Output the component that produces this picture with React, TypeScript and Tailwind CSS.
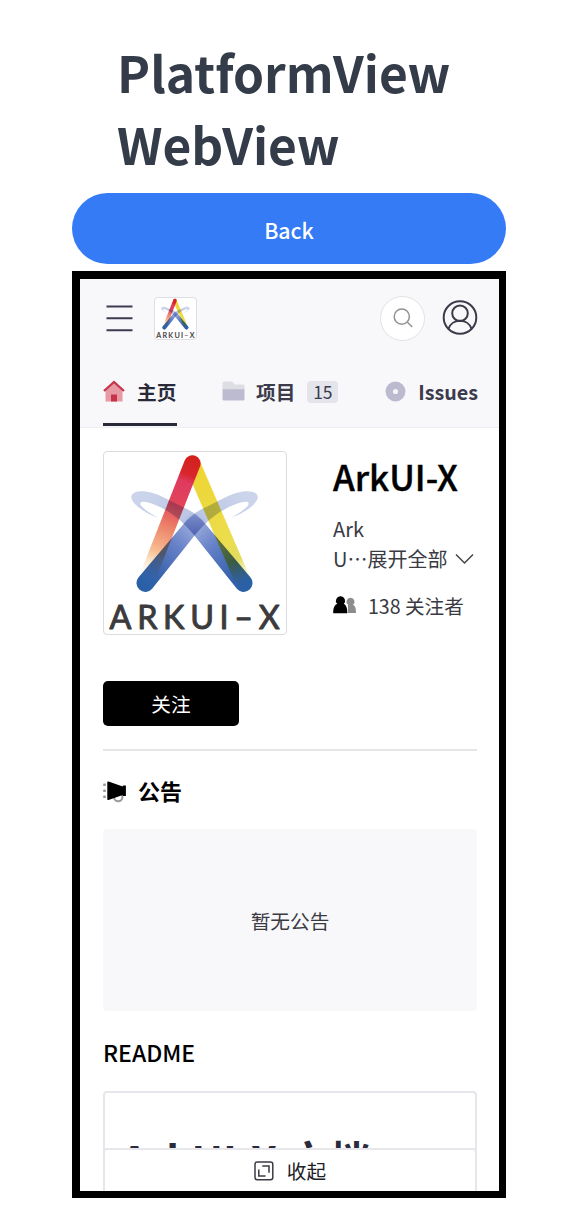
import React from "react";

const SWOOSH =
  "M129 413 L275 240 C300 216 322 204 342 196 C375 178 400 165 425 157 C455 148 486 150 490 167 C494 188 450 218 410 232 C438 216 464 199 463 189 C461 178 428 186 388 208 C358 224 330 248 300 285 L170 448 A26 26 0 0 1 129 413 Z";

function Logo({ id, className }: { id: string; className: string }) {
  return (
    <svg viewBox="24 33 552 552" className={className} aria-label="ArkUI-X">
      <defs>
        <linearGradient id={`${id}-red`} gradientUnits="userSpaceOnUse" x1="292" y1="45" x2="150" y2="430">
          <stop offset="0" stopColor="#d3201c" />
          <stop offset="0.14" stopColor="#d8262c" />
          <stop offset="0.2" stopColor="#e03a60" />
          <stop offset="0.38" stopColor="#e1455a" />
          <stop offset="0.55" stopColor="#ec8068" />
          <stop offset="0.75" stopColor="#f7bd90" />
          <stop offset="0.95" stopColor="#fbe6c0" stopOpacity="0" />
        </linearGradient>
        <linearGradient id={`${id}-yellow`} gradientUnits="userSpaceOnUse" x1="292" y1="60" x2="447" y2="430">
          <stop offset="0" stopColor="#eed431" />
          <stop offset="0.65" stopColor="#ebdd4c" />
          <stop offset="0.82" stopColor="#e0dc60" />
          <stop offset="1" stopColor="#efe97a" stopOpacity="0" />
        </linearGradient>
        <linearGradient id={`${id}-blue`} gradientUnits="userSpaceOnUse" x1="150" y1="440" x2="430" y2="150">
          <stop offset="0" stopColor="#2960a6" />
          <stop offset="0.14" stopColor="#3a64ae" />
          <stop offset="0.38" stopColor="#6681c8" />
          <stop offset="0.55" stopColor="#94a5d8" />
          <stop offset="0.68" stopColor="#bcc6e5" />
          <stop offset="1" stopColor="#cbd4ea" />
        </linearGradient>
      </defs>
      <g style={{ isolation: "isolate" }}>
        <path d="M292 68 L447 428" stroke={`url(#${id}-yellow)`} strokeWidth="48" strokeLinecap="round" />
        <path d="M292 68 L150 428" stroke={`url(#${id}-red)`} strokeWidth="50" strokeLinecap="round" />
        <path d={SWOOSH} fill={`url(#${id}-blue)`} className="mix-blend-multiply" />
        <path d={SWOOSH} fill={`url(#${id}-blue)`} className="mix-blend-multiply" transform="matrix(-1 0 0 1 597 0)" />
      </g>
      <text
        x="41"
        y="569"
        textLength="516"
        lengthAdjust="spacing"
        fill="#3b3b3d"
        stroke="#3b3b3d"
        strokeWidth="3"
        strokeLinejoin="round"
        fontSize="98"
        fontFamily="Lato, sans-serif"
      >
        ARKUI–X
      </text>
    </svg>
  );
}

function MenuIcon() {
  return (
    <svg className="h-[28px] w-[27px]" viewBox="0 0 27 28" stroke="#3c3b50" strokeWidth="2">
      <path d="M.5 2.500h26M.5 14.300h26M.5 26.300h26" />
    </svg>
  );
}

function SearchIcon() {
  return (
    <svg className="size-5" viewBox="0 0 20 20" fill="none" stroke="#929292" strokeWidth="1.5">
      <circle cx="8.8" cy="8.6" r="7.6" />
      <path d="m14.2 14 5 5" />
    </svg>
  );
}

function UserIcon() {
  return (
    <svg className="size-9" viewBox="0 0 36 36" fill="none" stroke="#3b3a4a" strokeWidth="2">
      <circle cx="18" cy="17.500" r="16.3" />
      <circle cx="18" cy="13.2" r="7.8" />
      <path d="M6.4 28.900C8 24.100 12.6 20.800 18 20.800s10 3.3 11.6 8.100" />
    </svg>
  );
}

function HomeIcon() {
  return (
    <svg className="-mt-0.5 h-[22px] w-[22px]" viewBox="0 0 22 22" fill="none">
      <path d="M2.5 10.5 11 3l8.500 7.500V21.500H2.500Z" fill="#e79aa3" />
      <path d="M1 11 11 2l10 9" stroke="#c53449" strokeWidth="2.300" />
      <path d="M8 14.500h6v7H8Z" fill="#c53449" />
    </svg>
  );
}

function FolderIcon() {
  return (
    <svg className="-mt-0.5 h-[20px] w-[23px]" viewBox="0 0 23 20">
      <path d="M.5 2q0-1.500 1.500-1.500H10l3 3h8.500q1 0 1 1V9H.5Z" fill="#dddde4" />
      <path d="M.5 8.300h22V18q0 1.500-1.500 1.500H2Q.5 19.500.5 18Z" fill="#bdbbd0" />
    </svg>
  );
}

function IssueIcon() {
  return (
    <svg className="-mt-0.5 h-[21px] w-[21px]" viewBox="0 0 21 21">
      <circle cx="10.500" cy="10.500" r="10" fill="#bcbacf" />
      <circle cx="10.500" cy="10.500" r="2.600" fill="#f4f4f9" />
    </svg>
  );
}

function FollowersIcon() {
  return (
    <svg className="-mt-0.5 h-[18px] w-[24px]" viewBox="0 0 24 18">
      <path d="M17.500 1.800a3.900 3.900 0 0 1 2.500 7c2.300 1.200 3 3.500 3 8.200h-8V8.800A3.900 3.900 0 0 1 17.500 1.800Z" fill="#8c8c8c" />
      <path d="M7.500.3a4.400 4.400 0 0 1 3.300 7.500C13.300 9.300 14.300 12 14.300 16v1.300H.2V16c0-4 1-6.700 4-8.200A4.400 4.400 0 0 1 7.500.3Z" fill="#000" />
    </svg>
  );
}

function MegaphoneIcon() {
  return (
    <svg className="mt-px h-[23px] w-[24px]" viewBox="0 0 24 23" fill="none">
      <g fill="#999">
        <rect x=".2" y="3.500" width="2.600" height="2.600" rx=".6" />
        <rect x=".2" y="9.500" width="2.600" height="2.600" rx=".6" />
        <rect x=".2" y="15.400" width="2.600" height="2.600" rx=".6" />
      </g>
      <circle cx="15.200" cy="17" r="4.200" stroke="#999" strokeWidth="2" />
      <path d="M4.300 2.300Q4.300 1.100 5.500 1.500L19.800 6.600V5.500h3.100v10.400h-3.100v-1L5.500 19.900Q4.300 20.300 4.300 19.200Z" fill="#000" />
    </svg>
  );
}

function CollapseIcon() {
  return (
    <svg className="size-5" viewBox="0 0 20 20" fill="none" stroke="#3b3b45" strokeWidth="1.500">
      <rect x="1" y="1" width="17.800" height="17.800" rx="2.200" />
      <path d="M8.300 5H15v6.700M4.800 8.500V15h6.800" />
    </svg>
  );
}

export default function App() {
  return (
    <div
      lang="zh-CN"
      className="flex h-[1231px] w-[578px] flex-col overflow-hidden bg-white px-[72px] whitespace-nowrap [font-family:'Noto_Sans_CJK_SC',sans-serif]"
    >
      <h1 className="mt-[35px] ml-[45px] text-[49.700px] leading-[72px] font-bold text-[#333c48]">
        PlatformView
        <br />
        WebView
      </h1>
      <button className="mt-[14px] h-[71px] w-[434px] rounded-full bg-[#347bf5] pt-[3px] text-[21.300px] font-medium text-white">
        Back
      </button>

      <div className="mt-[7px] flex h-[927px] w-[434px] flex-col overflow-hidden border-8 border-r-[7px] border-b-[7px] border-black">
        <header className="flex h-[149px] shrink-0 flex-col border-b border-[#eeeef1] bg-[#f8f8fb] pr-[21px] pl-[23px]">
          <div className="flex h-[78px] items-center pl-[3px]">
            <MenuIcon />
            <div className="ml-[21px] size-[43px] overflow-hidden rounded border border-[#dedee3] bg-white">
              <Logo id="small" className="size-full" />
            </div>
            <div className="ml-auto flex size-[45px] items-center justify-center rounded-full border border-[#e2e2e6] bg-white">
              <SearchIcon />
            </div>
            <div className="ml-[17px]">
              <UserIcon />
            </div>
          </div>
          <nav className="flex h-[69px] text-[20px] font-bold text-[#3b3b4b]">
            <div className="flex h-full w-[74px] shrink-0 items-center border-b-3 border-[#292a38] pt-1 text-[#292a38]">
              <HomeIcon />
              <span className="ml-3 text-[19.700px]">主页</span>
            </div>
            <div className="ml-[45px] flex h-full shrink-0 items-center pt-px">
              <FolderIcon />
              <span className="ml-[11px] text-[19.700px]">项目</span>
              <span className="ml-3 flex h-[22px] w-[31px] items-center justify-center rounded bg-[#e4e4ed] text-[17.500px] font-normal">
                15
              </span>
            </div>
            <div className="ml-auto flex h-full shrink-0 items-center pt-px">
              <IssueIcon />
              <span className="ml-3 text-[19.700px]">Issues</span>
            </div>
          </nav>
        </header>

        <main className="flex flex-col pr-[22px] pl-[23px]">
          <section className="mt-[23px] flex h-[184px]">
            <div className="h-[184px] w-[184px] overflow-hidden rounded border border-[#dcdcdf] bg-white">
              <Logo id="large" className="size-full" />
            </div>
            <div className="ml-[46px] text-[20px] leading-[30px] text-[#3a3a42]">
              <h2 className="mt-[3px] text-[35px] leading-[44px] font-medium text-black [-webkit-text-stroke:0.4px_black]">
                ArkUI-X
              </h2>
              <p className="mt-[16px]">Ark</p>
              <div className="flex items-center">
                <span>U…展开全部</span>
                <svg className="ml-2 h-[12px] w-[19px]" viewBox="0 0 19 12" fill="none" stroke="#44444c" strokeWidth="1.500">
                  <path d="m1 1.500 8.500 8.500L18 1.500" />
                </svg>
              </div>
              <div className="mt-[17px] flex items-center text-[19.600px]">
                <FollowersIcon />
                <span className="ml-[11px]">138 关注者</span>
              </div>
            </div>
          </section>

          <button className="mt-[46px] h-[45px] w-[136px] rounded-[5px] bg-black pt-px text-[19.700px] text-white">
            关注
          </button>

          <section className="mt-[23px] border-t-2 border-[#e5e5e8]">
            <h3 className="mt-[24px] flex h-[32px] items-center text-[22px] font-bold text-black">
              <MegaphoneIcon />
              <span className="-mt-0.5 ml-[11px]">公告</span>
            </h3>
            <div className="mt-[22px] flex h-[182px] items-center justify-center rounded bg-[#f8f8fa] pt-0.5 text-[19.700px] text-[#3a3a42]">
              暂无公告
            </div>
          </section>

          <section>
            <h3 className="mt-[25px] text-[23px] leading-[32px] font-medium text-black">README</h3>
            <article className="mt-[23px] h-[110px] rounded border-2 border-[#e6e6eb]">
              <div className="h-[55px] overflow-hidden px-4 pt-[44px]">
                <h1 className="text-[42px] leading-[44px] font-bold text-[#292b3b]">ArkUI-X 文档</h1>
              </div>
              <div className="-mx-0.5 flex h-[46px] items-center justify-center rounded border-2 border-[#e6e6eb] bg-white text-[19.700px] text-[#202025]">
                <CollapseIcon />
                <span className="ml-[13px]">收起</span>
              </div>
            </article>
          </section>
        </main>
      </div>
    </div>
  );
}
